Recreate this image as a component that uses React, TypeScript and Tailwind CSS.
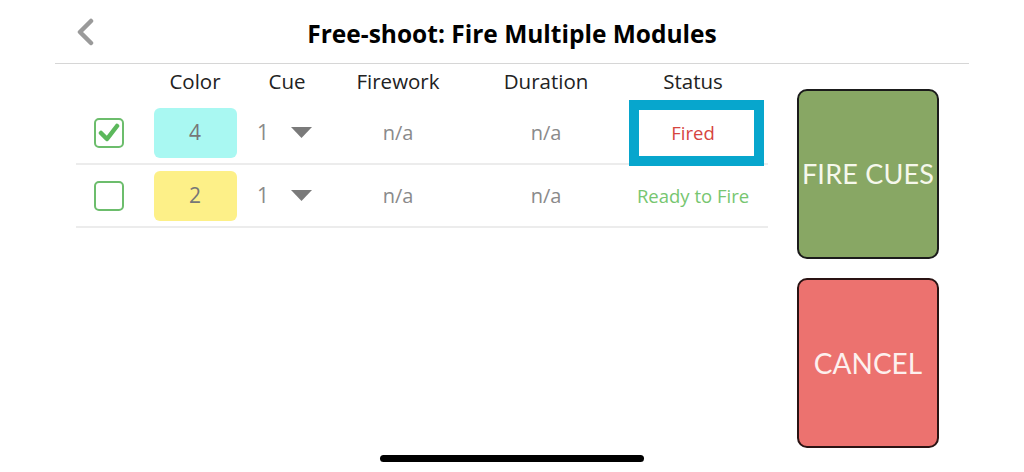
import { ReactNode } from "react";

type Row = {
  checked: boolean;
  color: string;
  count: string;
  cue: string;
  status: ReactNode;
  highlight?: boolean;
};

const rows: Row[] = [
  { checked: true, color: "bg-[#a9f8f2]", count: "4", cue: "1", status: <span className="text-[#d6453f]">Fired</span>, highlight: true },
  { checked: false, color: "bg-[#fdf088]", count: "2", cue: "1", status: <span className="text-[#76c670]">Ready to Fire</span> },
];

const gridCols = "grid grid-cols-[66px_106px_78px_144px_152px_146px]";

const Checkbox = ({ checked }: { checked: boolean }) => (
  <div className="flex h-[30px] w-[30px] items-center justify-center rounded-[5px] border-2 border-[#6cbd6c]">
    {checked && (
      <svg width="22" height="20" viewBox="0 0 22 20">
        <polyline points="3,10 9,16 19,3" fill="none" stroke="#5cb85c" strokeWidth="4.5" strokeLinecap="round" strokeLinejoin="round" />
      </svg>
    )}
  </div>
);

export default function App() {
  return (
    <div className="relative h-[472px] w-[1024px] overflow-hidden bg-white font-['Open_Sans','Noto_Sans',sans-serif]">
      <div className="mx-[55px] flex h-[64px] items-center border-b border-[#d6d6d6] pt-[6px]">
        <div className="ml-[20px] flex w-[40px] items-center">
          <svg width="20" height="28" viewBox="0 0 20 28" className="-mt-[6px]">
            <polyline points="16,3 5,14 16,25" fill="none" stroke="#9a9a9a" strokeWidth="4.5" strokeLinecap="round" strokeLinejoin="round" />
          </svg>
        </div>
        <h1 className="flex-1 pr-[60px] text-center text-[24.5px] font-bold text-black">Free-shoot: Fire Multiple Modules</h1>
      </div>

      <div className="flex">
        <div className="ml-[76px] w-[692px]">
          <div className={`${gridCols} h-[38px] items-center pb-[4px] text-center text-[20.5px] text-[#222]`}>
            <span />
            <span>Color</span>
            <span>Cue</span>
            <span>Firework</span>
            <span>Duration</span>
            <span className="pr-[4px]">Status</span>
          </div>
          {rows.map((row, i) => (
            <div key={i} className={`${gridCols} h-[63px] items-center border-b-2 border-[#ececec] text-[20px] text-[#8a8a8a]`}>
              <div className="flex justify-center">
                <Checkbox checked={row.checked} />
              </div>
              <div className="flex justify-center">
                <div className={`flex h-[50px] w-[83px] items-center justify-center rounded-[6px] text-[21px] text-[#777] ${row.color}`}>{row.count}</div>
              </div>
              <div className="flex items-center pl-[9px]">
                <span className="w-[12px] text-[21px] text-[#8a8a8a]">{row.cue}</span>
                <svg className="ml-[22px]" width="21" height="11" viewBox="0 0 21 11">
                  <polygon points="0,0 21,0 10.5,11" fill="#7a7a7a" />
                </svg>
              </div>
              <span className="text-center">n/a</span>
              <span className="text-center">n/a</span>
              <div className="relative flex h-full items-center justify-center pr-[4px] text-[18.5px]">
                {row.highlight && <div className="absolute left-[7px] top-[-2px] h-[66px] w-[135px] border-[10px] border-[#07a6cd]" />}
                <span className="relative">{row.status}</span>
              </div>
            </div>
          ))}
        </div>

        <div className="ml-[29px] mt-[25px] flex w-[142px] flex-col gap-[19px] font-['Lato',sans-serif]">
          <button type="button" className="flex h-[170px] items-center justify-center rounded-[10px] border-2 border-[#1b1b1b] bg-[#88a764] text-[27px] tracking-[0.2px] text-[#f6f8ec]">
            FIRE CUES
          </button>
          <button type="button" className="flex h-[170px] items-center justify-center rounded-[10px] border-2 border-[#2a1313] bg-[#ec726f] text-[28px] text-[#fdf0ee]">
            CANCEL
          </button>
        </div>
      </div>

      <div className="absolute bottom-[10px] left-[380px] h-[7px] w-[264px] rounded-full bg-black" />
    </div>
  );
}
